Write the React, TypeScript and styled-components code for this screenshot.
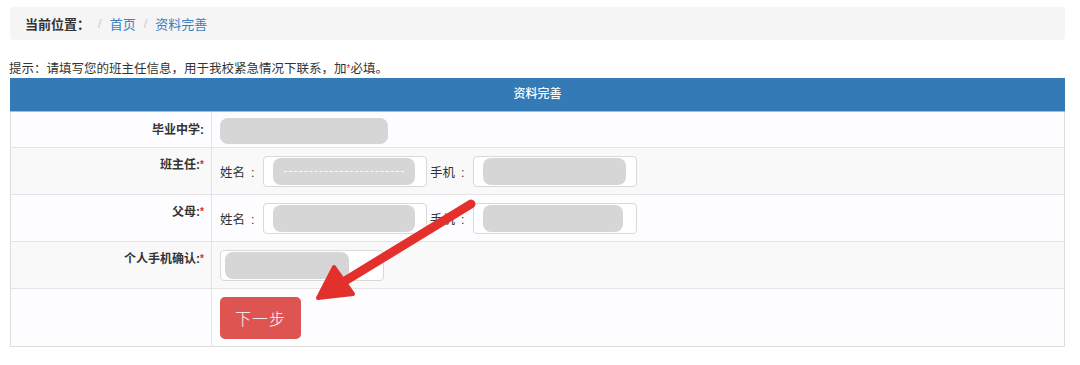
import React, { ReactElement } from 'react';
import styled, { createGlobalStyle, css } from 'styled-components';

const GlobalStyle = createGlobalStyle`
    html, body {
        margin: 0;
        padding: 0;
        background: #ffffff;
    }
    body {
        font-family: "Liberation Sans", "Noto Sans CJK SC", sans-serif;
        font-size: 12px;
        color: #333333;
    }
`;

const Page = styled.div`
    position: relative;
    width: 1080px;
    height: 365px;
    padding: 7px 15px 0 10px;
    box-sizing: border-box;
    overflow: hidden;
`;

const Breadcrumb = styled.div`
    display: flex;
    align-items: center;
    height: 33px;
    padding: 0 15px;
    background-color: #f5f5f5;
    border-radius: 4px;
    font-size: 13px;
`;

const Current = styled.span`
    font-weight: bold;
    color: #333333;
`;

const Divider = styled.span`
    padding: 0 8px;
    color: #cccccc;
`;

const Crumb = styled.a`
    color: #3a7fc0;
    text-decoration: none;
`;

const Hint = styled.div`
    margin: 20px 0 0 -1px;
    height: 18px;
    line-height: 18px;
    font-size: 12.5px;
    color: #333333;
`;

const Star = styled.span`
    color: #e12b2b;
    font-size: 10px;
    vertical-align: top;
`;

const FormTable = styled.div`
    border: 1px solid #dddddd;
    border-top: none;
`;

const TableHead = styled.div`
    height: 33px;
    line-height: 33px;
    text-align: center;
    color: #ffffff;
    background-color: #337ab7;
    border-bottom: 1px solid #9cc0e0;
    font-size: 12px;
    font-weight: 500;
`;

const Row = styled.div<{ striped?: boolean }>`
    display: grid;
    grid-template-columns: 200px 1fr;
    border-top: 1px solid #e4e4e4;
    background-color: ${(p) => (p.striped ? '#f9f9fa' : '#fdfcfe')};
    &:first-of-type {
        border-top: none;
    }
`;

const LabelCell = styled.div<{ compact?: boolean }>`
    padding: 8px 7px 7px 8px;
    text-align: right;
    font-weight: bold;
    line-height: 18px;
    color: #333333;
    ${(p) =>
        p.compact &&
        css`
            padding-top: 6px;
            padding-bottom: 3px;
            line-height: 25px;
        `}
`;

const FieldCell = styled.div<{ compact?: boolean }>`
    display: flex;
    align-items: center;
    padding: 8px 8px 7px 8px;
    border-left: 1px solid #e4e4e4;
    ${(p) =>
        p.compact &&
        css`
            padding-top: 6px;
            padding-bottom: 3px;
        `}
`;

const FieldLabel = styled.span`
    width: 43px;
    flex: none;
    font-size: 12.5px;
    color: #333333;
`;

const Colon = styled.span`
    margin-left: 6px;
`;

const Input = styled.div<{ w: number }>`
    position: relative;
    width: ${(p) => p.w}px;
    height: 31px;
    box-sizing: border-box;
    border: 1px solid #d9d9d9;
    border-radius: 4px;
    background: #ffffff;
    margin-right: 3px;
    display: flex;
    align-items: center;
`;

const Blur = styled.div<{ w: number; h?: number; left?: number }>`
    width: ${(p) => p.w}px;
    height: ${(p) => p.h ?? 27}px;
    margin-left: ${(p) => p.left ?? 9}px;
    border-radius: 8px;
    background-color: #d6d6d6;
    display: flex;
    align-items: center;
    justify-content: center;
`;

const BlurLine = styled.div`
    width: 120px;
    border-top: 1px dashed rgba(255, 255, 255, 0.9);
`;

const NextButton = styled.button`
    width: 81px;
    height: 42px;
    border: none;
    border-radius: 5px;
    background-color: #dd5450;
    color: #ffffff;
    font-family: "Noto Sans CJK SC", sans-serif;
    font-size: 16px;
    font-weight: 300;
    letter-spacing: 1px;
`;

const ArrowLayer = styled.svg`
    position: absolute;
    left: 0;
    top: 0;
    pointer-events: none;
`;

type LabelProps = { text: string; required?: boolean; compact?: boolean };

const Label = ({ text, required, compact }: LabelProps): ReactElement => (
    <LabelCell compact={compact}>
        {text}
        {required && <Star>*</Star>}
    </LabelCell>
);

const Field = ({ name }: { name: string }): ReactElement => (
    <FieldLabel>
        {name}
        <Colon>:</Colon>
    </FieldLabel>
);

const App = (): ReactElement => {
    return (
        <>
            <GlobalStyle />
            <Page>
                <Breadcrumb>
                    <Current>当前位置：</Current>
                    <Divider>/</Divider>
                    <Crumb>首页</Crumb>
                    <Divider>/</Divider>
                    <Crumb>资料完善</Crumb>
                </Breadcrumb>
                <Hint>
                    提示：请填写您的班主任信息，用于我校紧急情况下联系，加<Star>*</Star>必填。
                </Hint>
                <TableHead>资料完善</TableHead>
                <FormTable>
                    <Row>
                        <Label text="毕业中学:" compact />
                        <FieldCell compact>
                            <Blur w={168} h={26} left={0} />
                        </FieldCell>
                    </Row>
                    <Row striped>
                        <Label text="班主任:" required />
                        <FieldCell>
                            <Field name="姓名" />
                            <Input w={164}>
                                <Blur w={142}>
                                    <BlurLine />
                                </Blur>
                            </Input>
                            <Field name="手机" />
                            <Input w={164}>
                                <Blur w={143} />
                            </Input>
                        </FieldCell>
                    </Row>
                    <Row>
                        <Label text="父母:" required />
                        <FieldCell>
                            <Field name="姓名" />
                            <Input w={164}>
                                <Blur w={142} />
                            </Input>
                            <Field name="手机" />
                            <Input w={164}>
                                <Blur w={140} />
                            </Input>
                        </FieldCell>
                    </Row>
                    <Row striped>
                        <Label text="个人手机确认:" required />
                        <FieldCell>
                            <Input w={164}>
                                <Blur w={124} left={4} />
                            </Input>
                        </FieldCell>
                    </Row>
                    <Row>
                        <LabelCell />
                        <FieldCell>
                            <NextButton>下一步</NextButton>
                        </FieldCell>
                    </Row>
                </FormTable>
                <ArrowLayer width={1080} height={365} viewBox="0 0 1080 365">
                    <line
                        x1={471}
                        y1={204}
                        x2={340}
                        y2={284}
                        stroke="#e3302d"
                        strokeWidth={9}
                        strokeLinecap="round"
                    />
                    <polygon
                        points="318,298 334,267 353,294"
                        fill="#e3302d"
                        stroke="#e3302d"
                        strokeWidth={4}
                        strokeLinejoin="round"
                    />
                </ArrowLayer>
            </Page>
        </>
    );
};

export default App;
